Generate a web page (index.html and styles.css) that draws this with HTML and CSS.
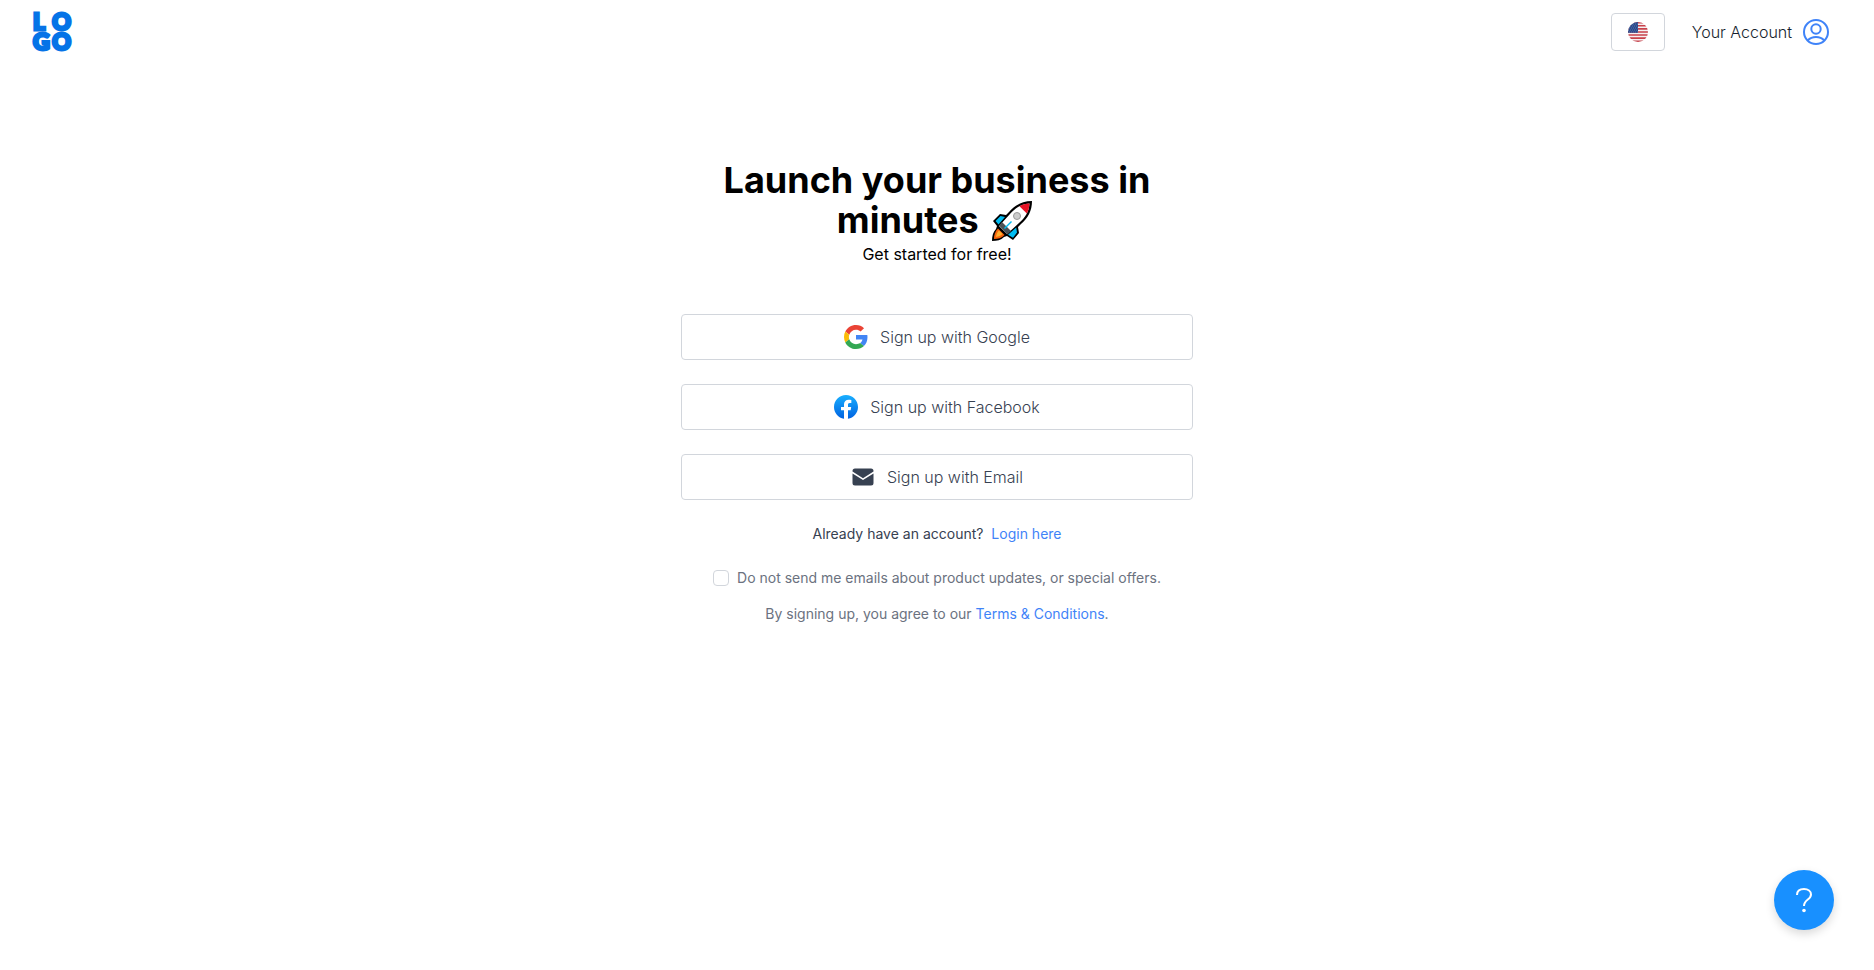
FILE: index.html
```html
<!DOCTYPE html>
<html lang="en">
<head>
    <meta charset="UTF-8">
    <meta name="viewport" content="width=device-width, initial-scale=1.0">
    <title>Sign up</title>
    <link rel="stylesheet" href="styles.css">
</head>
<body>
    <header class="header">
        <a class="logo" href="#">
            <svg width="40" height="40" viewBox="0 0 40 40">
                <text x="1" y="18">L</text>
                <text x="39" y="18" text-anchor="end">O</text>
                <text x="1" y="38">G</text>
                <text x="39" y="38" text-anchor="end">O</text>
            </svg>
        </a>
        <div class="header-right">
            <button type="button" class="lang-btn" aria-label="Language">
                <svg width="20" height="20" viewBox="0 0 20 20">
                    <clipPath id="flagClip"><circle cx="10" cy="10" r="10"/></clipPath>
                    <g clip-path="url(#flagClip)">
                        <rect width="20" height="20" fill="#f5f0f1"/>
                        <path d="M0 .8h20M0 3.8h20M0 6.9h20M0 10h20M0 13h20M0 16.1h20M0 19.2h20" stroke="#c8414b" stroke-width="1.6"/>
                        <rect width="10" height="10.8" fill="#2b4a8b"/>
                        <path d="M1 2h9M2 4h8M1 6h9M2 8h8M1 10h9" stroke="#8fa3cc" stroke-width=".6" stroke-dasharray=".8 1.2"/>
                    </g>
                </svg>
            </button>
            <a class="account" href="#">
                Your Account
                <svg width="26" height="26" viewBox="0 0 26 26" fill="none" stroke="#3f83f8" stroke-width="2">
                    <circle cx="13" cy="13" r="12"/>
                    <circle cx="13" cy="10" r="4.7"/>
                    <path d="M4.8 21.4c2-2.200 5-3.400 8.200-3.400s6.200 1.200 8.200 3.400"/>
                </svg>
            </a>
        </div>
    </header>

    <main class="signup">
        <h1>Launch your business in minutes
            <svg class="rocket" width="42" height="42" viewBox="0 0 42 42">
                <path d="M41 1C31 1 24 5 18 12l-3 3-6-1-7 7 4 5-1 3c-3 3-4 7-4 12 5 0 9-1 12-4l3-1 6 4 6-7-1-6 3-3C37 18 41 11 41 1z" fill="#000"/>
                <path d="M38.500 3.500C30 4 24 8 19 14L8 26l8 8 12-11c6-5 10-11 10.500-19.500z" fill="#fff"/>
                <path d="M38.500 3.500c-4 .2-7 1-10 2.700l7.300 7.300c1.600-3 2.500-6 2.700-10z" fill="#e81224"/>
                <path d="M9.500 16l4.500 1-6.500 7.500-3-3.500zM26 32.500l-.8-5-8.200 7.200 5 3z" fill="#00bcf2"/>
                <path d="M8 25.500l3-3.500 9 9-3.500 3.500z" fill="#4a5257"/>
                <path d="M7 28.500l6.500 6.500C10.500 38 7 39 3 39c0-4 1-7.500 4-10.500z" fill="#f7630c"/>
                <path d="M8 30.500l3.500 3.500C9.500 36 8 36.500 5 37c.5-3 1-4.500 3-6.500z" fill="#ffb02e"/>
                <path d="M13.500 28.500l7-7" stroke="#00bcf2" stroke-width="1.400"/>
                <circle cx="26" cy="16" r="3.500" fill="#ccc" stroke="#999"/>
            </svg>
        </h1>
        <p class="subtitle">Get started for free!</p>

        <div class="buttons">
            <button type="button" class="signup-btn">
                <svg width="24" height="24" viewBox="0 0 48 48">
                    <path fill="#ea4335" d="M24 9.500c3.540 0 6.710 1.220 9.210 3.600l6.850-6.850C35.900 2.380 30.470 0 24 0 14.620 0 6.510 5.380 2.560 13.220l7.980 6.190C12.430 13.720 17.740 9.500 24 9.500z"/>
                    <path fill="#4285f4" d="M46.980 24.550c0-1.570-.15-3.090-.38-4.550H24v9.020h12.940c-.58 2.960-2.260 5.480-4.780 7.180l7.730 6c4.510-4.180 7.090-10.360 7.090-17.650z"/>
                    <path fill="#fbbc05" d="M10.530 28.590c-.48-1.450-.76-2.990-.76-4.590s.27-3.140.76-4.590l-7.980-6.190C.92 16.460 0 20.120 0 24c0 3.880.92 7.540 2.560 10.780l7.970-6.190z"/>
                    <path fill="#34a853" d="M24 48c6.480 0 11.930-2.130 15.890-5.810l-7.730-6c-2.150 1.450-4.920 2.300-8.160 2.300-6.260 0-11.570-4.220-13.470-9.910l-7.980 6.190C6.510 42.620 14.620 48 24 48z"/>
                </svg>
                Sign up with Google
            </button>
            <button type="button" class="signup-btn">
                <svg width="24" height="24" viewBox="0 0 36 36">
                    <linearGradient id="fbGradient" x1="0" y1="0" x2="0" y2="1">
                        <stop offset="0" stop-color="#19afff"/>
                        <stop offset="1" stop-color="#0062e0"/>
                    </linearGradient>
                    <path fill="url(#fbGradient)" d="M15 35.800C6.500 34.300 0 26.900 0 18 0 8.100 8.100 0 18 0s18 8.100 18 18c0 8.900-6.500 16.300-15 17.800l-1-.8h-4l-1 .8z"/>
                    <path fill="#fff" d="M25 23l.8-5H21v-3.500c0-1.400.5-2.500 2.700-2.500H26V7.400c-1.300-.2-2.700-.4-4-.4-4.100 0-7 2.500-7 7v4h-4.500v5H15v12.700c1 .2 2 .3 3 .3s2-.1 3-.3V23h4z"/>
                </svg>
                Sign up with Facebook
            </button>
            <button type="button" class="signup-btn">
                <svg width="24" height="24" viewBox="0 0 24 24" fill="#374151">
                    <path d="M4 3.500h16a2.500 2.500 0 0 1 2.500 2.500v.6L12 13.300 1.500 6.600V6A2.500 2.500 0 0 1 4 3.500z"/>
                    <path d="M1.500 8.400L12 15l10.500-6.600v9.600a2.500 2.500 0 0 1-2.500 2.500H4A2.500 2.500 0 0 1 1.500 18z"/>
                </svg>
                Sign up with Email
            </button>
        </div>

        <p class="login">Already have an account? <a href="#">Login here</a></p>

        <div class="optout">
            <input type="checkbox" id="noEmails" name="noEmails">
            <label for="noEmails">Do not send me emails about product updates, or special offers.</label>
        </div>

        <p class="terms">By signing up, you agree to our <a href="#">Terms &amp; Conditions</a>.</p>
    </main>

    <button type="button" class="help-btn" aria-label="Help">
        <svg width="18" height="26" viewBox="0 0 18 26" fill="none" stroke="#fff" stroke-width="2">
            <path d="M2 8C2 4 5 2 9 2s7 2 7 5.500C16 13 9 12 9 19"/>
            <circle cx="9" cy="23.500" r="1.800" fill="#fff" stroke="none"/>
        </svg>
    </button>
</body>
</html>
```
FILE: styles.css
```css
* { box-sizing: border-box; }
body { margin: 0; background: #fff; color: #000; font-family: Inter, sans-serif; font-size: 16px; line-height: 24px; }
h1, p { margin: 0; }
a { color: #3f83f8; text-decoration: none; }
svg { display: block; flex: none; }
button { font-family: inherit; cursor: pointer; }

/* header */
.header { display: flex; align-items: center; justify-content: space-between; height: 64px; padding: 0 45px 0 32px; }
.logo text { font-family: Lato, sans-serif; font-size: 23px; font-weight: 900; fill: #0573e7; stroke: #0573e7; stroke-width: 3px; }
.logo svg { overflow: visible; }
.header-right { display: flex; align-items: center; gap: 27px; }
.lang-btn { display: flex; align-items: center; justify-content: center; width: 54px; height: 38px; padding: 0; background: #fff; border: 1px solid #d2d6dc; border-radius: 4px; }
.account { display: flex; align-items: center; gap: 11px; color: #161e2e; font-weight: 300; }

/* sign up */
.signup { width: 100%; max-width: 512px; margin: 96px auto 0; text-align: center; }
.signup h1 { font-size: 36px; font-weight: 700; line-height: 40px; }
.rocket { display: inline-block; margin: -2px 4px; vertical-align: -7px; }
.subtitle { line-height: 28px; }
.buttons { display: flex; flex-direction: column; gap: 24px; margin-top: 46px; }
.signup-btn { display: flex; align-items: center; justify-content: center; gap: 12px; width: 100%; height: 46px; background: #fff; border: 1px solid #d2d6dc; border-radius: 4px; color: #374151; font-size: 16px; font-weight: 300; }
.login { margin-top: 22px; color: #374151; font-size: 14px; }
.login a { margin-left: 4px; }
.optout { display: flex; align-items: center; justify-content: center; gap: 8px; margin-top: 20px; color: #6b7280; font-size: 14px; }
.optout input { appearance: none; width: 16px; height: 16px; margin: 0; background: #fff; border: 1px solid #d2d6dc; border-radius: 4px; }
.terms { margin-top: 12px; color: #6b7280; font-size: 14px; }

/* help bubble */
.help-btn { position: fixed; right: 40px; bottom: 40px; display: flex; align-items: center; justify-content: center; width: 60px; height: 60px; padding: 0; background: #1890ff; border: 0; border-radius: 50%; box-shadow: 0 4px 10px rgba(0, 0, 0, 0.15); }
```
